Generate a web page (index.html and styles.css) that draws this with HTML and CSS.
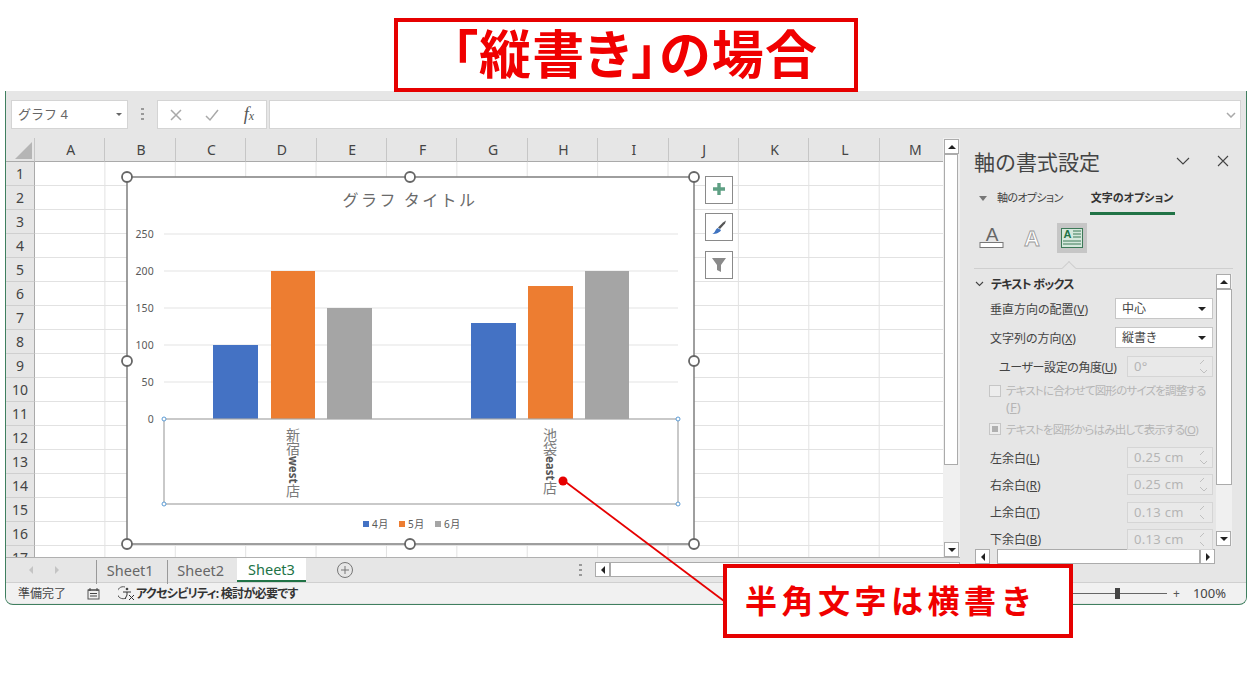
FILE: index.html
```html
<!DOCTYPE html>
<html lang="ja">
<head>
  <meta charset="UTF-8">
  <title>「縦書き」の場合</title>
  <link rel="stylesheet" href="styles.css">
</head>
<body>
  <div class="title-box">「縦書き」の場合</div>

  <div class="excel">
    <!-- 数式バー -->
    <div class="formula-bar">
      <div class="name-box">グラフ 4<span class="mini-arrow"></span></div>
      <div class="grip"></div>
      <div class="fx-buttons">
        <svg width="18" height="18" viewBox="0 0 18 18"><path class="stroke-light" d="M4 4l10 10M14 4L4 14"/></svg>
        <svg width="18" height="18" viewBox="0 0 18 18"><path class="stroke-light" d="M3 10l4 4 8-10"/></svg>
        <span class="fx">f<small>x</small></span>
      </div>
      <div class="formula-input"><svg width="10" height="6" viewBox="0 0 10 6"><path class="stroke-light" d="M1 1l4 4 4-4"/></svg></div>
    </div>

    <div class="middle">
      <div class="left-side">
        <div class="sheet-area">
          <div class="sheet">
            <div class="col-heads">
              <div class="corner"><span></span></div>
              <div class="col-head">A</div>
              <div class="col-head">B</div>
              <div class="col-head">C</div>
              <div class="col-head">D</div>
              <div class="col-head">E</div>
              <div class="col-head">F</div>
              <div class="col-head">G</div>
              <div class="col-head">H</div>
              <div class="col-head">I</div>
              <div class="col-head">J</div>
              <div class="col-head">K</div>
              <div class="col-head">L</div>
              <div class="col-head">M</div>
            </div>
            <div class="sheet-body">
              <div class="row-heads">
                <div class="row-head">1</div>
                <div class="row-head">2</div>
                <div class="row-head">3</div>
                <div class="row-head">4</div>
                <div class="row-head">5</div>
                <div class="row-head">6</div>
                <div class="row-head">7</div>
                <div class="row-head">8</div>
                <div class="row-head">9</div>
                <div class="row-head">10</div>
                <div class="row-head">11</div>
                <div class="row-head">12</div>
                <div class="row-head">13</div>
                <div class="row-head">14</div>
                <div class="row-head">15</div>
                <div class="row-head">16</div>
                <div class="row-head">17</div>
              </div>
              <div class="cells"></div>
            </div>

            <!-- グラフ（座標はページ座標のまま） -->
            <svg class="chart" width="630" height="390" viewBox="115 165 630 390">
              <rect x="127" y="177" width="567" height="367" fill="#fff" stroke="#7f7f7f" stroke-width="1.5"/>
              <text class="chart-title" x="410" y="206" text-anchor="middle">グラフ タイトル</text>

              <path class="gridline" d="M164 234H678M164 271H678M164 308H678M164 345H678M164 382H678"/>
              <text class="tick" x="154" y="238" text-anchor="end">250</text>
              <text class="tick" x="154" y="275" text-anchor="end">200</text>
              <text class="tick" x="154" y="312" text-anchor="end">150</text>
              <text class="tick" x="154" y="349" text-anchor="end">100</text>
              <text class="tick" x="154" y="386" text-anchor="end">50</text>
              <text class="tick" x="154" y="423" text-anchor="end">0</text>

              <rect x="213" y="345" width="45" height="74" fill="#4472c4"/>
              <rect x="271" y="271" width="44" height="148" fill="#ed7d31"/>
              <rect x="327" y="308" width="45" height="111" fill="#a5a5a5"/>
              <rect x="471" y="323" width="45" height="96" fill="#4472c4"/>
              <rect x="528" y="286" width="45" height="133" fill="#ed7d31"/>
              <rect x="585" y="271" width="44" height="148" fill="#a5a5a5"/>

              <rect x="164" y="419" width="514" height="85" fill="none" stroke="#a6a6a6" stroke-width="1.2"/>
              <circle class="small-handle" cx="164" cy="419" r="2"/>
              <circle class="small-handle" cx="678" cy="419" r="2"/>
              <circle class="small-handle" cx="164" cy="504" r="2"/>
              <circle class="small-handle" cx="678" cy="504" r="2"/>

              <text class="axis-label" x="293" y="428">新宿<tspan class="latin">west</tspan>店</text>
              <text class="axis-label" x="550" y="428">池袋<tspan class="latin">east</tspan>店</text>

              <rect x="363" y="521" width="6" height="6" fill="#4472c4"/>
              <text class="legend" x="372" y="528">4月</text>
              <rect x="399" y="521" width="6" height="6" fill="#ed7d31"/>
              <text class="legend" x="408" y="528">5月</text>
              <rect x="435" y="521" width="6" height="6" fill="#a5a5a5"/>
              <text class="legend" x="444" y="528">6月</text>

              <circle class="handle" cx="127" cy="177" r="5"/>
              <circle class="handle" cx="410" cy="177" r="5"/>
              <circle class="handle" cx="694" cy="177" r="5"/>
              <circle class="handle" cx="127" cy="361" r="5"/>
              <circle class="handle" cx="694" cy="361" r="5"/>
              <circle class="handle" cx="127" cy="544" r="5"/>
              <circle class="handle" cx="410" cy="544" r="5"/>
              <circle class="handle" cx="694" cy="544" r="5"/>

              <rect class="chart-btn" x="705.500" y="176.500" width="27" height="27"/>
              <path d="M719 183v12M713 189h12" stroke="#5fa084" stroke-width="3.400" fill="none"/>
              <rect class="chart-btn" x="705.500" y="213.500" width="27" height="27"/>
              <path d="M726 220.500l-1 3-5 5.500-2-1.500 5-5z" fill="#555"/>
              <path d="M712 234c3-.5 3-4.500 5.500-6l3.500 2c-1 2.500-4.500 4-9 4z" fill="#3f73c0"/>
              <rect class="chart-btn" x="705.500" y="251.500" width="27" height="27"/>
              <path d="M712 258h14l-5 7v7l-4-2v-5z" fill="#8a8a8a"/>
            </svg>
          </div>

          <div class="v-scroll">
            <div class="sb-btn"><span class="tri-up"></span></div>
            <div class="sb-thumb sheet-thumb"></div>
            <div class="sb-space"></div>
            <div class="sb-btn"><span class="tri-down"></span></div>
          </div>
        </div>

        <div class="tab-bar">
          <div class="tab-arrows"><span class="arrow-l"></span><span class="arrow-r"></span></div>
          <div class="tab">Sheet1</div>
          <div class="tab">Sheet2</div>
          <div class="tab active">Sheet3</div>
          <div class="add-sheet">
            <svg width="18" height="18" viewBox="0 0 18 18"><circle cx="9" cy="9" r="7.500" fill="none" stroke="#777"/><path d="M9 5v8M5 9h8" stroke="#777" fill="none"/></svg>
          </div>
          <div class="grip tab-grip"></div>
          <div class="h-scroll">
            <div class="sb-btn"><span class="tri-left"></span></div>
            <div class="sb-thumb"></div>
          </div>
        </div>
      </div>

      <!-- 書式設定パネル -->
      <div class="panel">
        <div class="panel-head">
          <h1>軸の書式設定</h1>
          <svg class="panel-chevron" width="14" height="8" viewBox="0 0 14 8"><path class="stroke-dark" d="M1 1l6 6 6-6"/></svg>
          <svg class="panel-close" width="12" height="12" viewBox="0 0 12 12"><path class="stroke-dark" d="M1 1l10 10M11 1L1 11"/></svg>
        </div>
        <div class="panel-tabs">
          <span class="tab-caret"></span>
          <span class="ptab">軸のオプション</span>
          <span class="ptab active">文字のオプション</span>
        </div>
        <div class="panel-icons">
          <svg class="icon-fill" width="26" height="26" viewBox="0 0 26 26">
            <text class="icon-a" x="13" y="16" text-anchor="middle">A</text>
            <rect x="1" y="17.500" width="23" height="5" fill="#fff" stroke="#777"/>
          </svg>
          <svg class="icon-outline" width="20" height="26" viewBox="0 0 20 26">
            <text class="icon-a-line" x="10" y="21" text-anchor="middle">A</text>
          </svg>
          <div class="icon-selected">
            <svg width="22" height="20" viewBox="0 0 22 20">
              <rect x="0.500" y="0.500" width="21" height="19" fill="#d5e8dc" stroke="#3d7a58"/>
              <text class="icon-a-small" x="6.500" y="10" text-anchor="middle">A</text>
              <path d="M12 3h8M12 6h8M12 9h8M2 13h18M2 16h18" stroke="#3d7a58" fill="none"/>
            </svg>
          </div>
        </div>
        <div class="panel-rule"><span></span></div>

        <div class="panel-body">
          <div class="section">
            <div class="section-head">
              <svg width="9" height="6" viewBox="0 0 9 6"><path class="stroke-dark" d="M1 1l3.500 3.500L8 1"/></svg>
              <span>テキスト ボックス</span>
            </div>
            <div class="field">
              <label>垂直方向の配置(<u>V</u>)</label>
              <div class="select">中心<span class="tri-down"></span></div>
            </div>
            <div class="field">
              <label>文字列の方向(<u>X</u>)</label>
              <div class="select">縦書き<span class="tri-down"></span></div>
            </div>
            <div class="field">
              <label class="indent">ユーザー設定の角度(<u>U</u>)</label>
              <div class="spin">0°<span class="spin-arrows"></span></div>
            </div>
            <div class="check two-lines">
              <span class="box"></span>
              <span>テキストに合わせて図形のサイズを調整する<br><span class="wide">(<u>F</u>)</span></span>
            </div>
            <div class="check">
              <span class="box on"></span>
              <span>テキストを図形からはみ出して表示する(<u>O</u>)</span>
            </div>
            <div class="field tight">
              <label>左余白(<u>L</u>)</label>
              <div class="spin">0.25 cm<span class="spin-arrows"></span></div>
            </div>
            <div class="field tight">
              <label>右余白(<u>R</u>)</label>
              <div class="spin">0.25 cm<span class="spin-arrows"></span></div>
            </div>
            <div class="field tight">
              <label>上余白(<u>T</u>)</label>
              <div class="spin">0.13 cm<span class="spin-arrows"></span></div>
            </div>
            <div class="field tight">
              <label>下余白(<u>B</u>)</label>
              <div class="spin">0.13 cm<span class="spin-arrows"></span></div>
            </div>
          </div>
          <div class="v-scroll inner">
            <div class="sb-btn"><span class="tri-up"></span></div>
            <div class="sb-thumb inner-thumb"></div>
            <div class="sb-space"></div>
            <div class="sb-btn"><span class="tri-down"></span></div>
          </div>
        </div>
        <div class="panel-hscroll">
          <div class="sb-btn"><span class="tri-left"></span></div>
          <div class="sb-thumb"></div>
          <div class="sb-btn"><span class="tri-right"></span></div>
        </div>
      </div>
    </div>

    <!-- ステータスバー -->
    <div class="status-bar">
      <span class="ready">準備完了</span>
      <svg class="macro-icon" width="13" height="13" viewBox="0 0 13 13">
        <rect x="1" y="3" width="11" height="9" fill="#eee" stroke="#555"/>
        <path d="M1 3h11M3 1v3M10 1v3M3 6.500h7M3 9h7" stroke="#444" fill="none"/>
      </svg>
      <svg class="access-icon" width="17" height="16" viewBox="0 0 17 16">
        <path d="M7 2a6 6 0 1 0 1 11" stroke="#555" fill="none"/>
        <circle cx="9" cy="4" r="1.300" fill="#444"/>
        <path d="M5 7h8M9 7v3M9 10l-2 4M11 10l5 5M16 10l-5 5" stroke="#333" fill="none"/>
      </svg>
      <span class="access-text">アクセシビリティ: 検討が必要です</span>
      <div class="zoom-area">
        <div class="zoom-slider"><span></span></div>
        <span class="zoom-plus">+</span>
        <span class="zoom-pct">100%</span>
      </div>
    </div>
  </div>

  <svg class="pointer" width="1258" height="686" viewBox="0 0 1258 686">
    <path d="M563 480L724 601" stroke="#e60000" stroke-width="1.800" fill="none"/>
    <circle cx="563" cy="481" r="4.500" fill="#e60000"/>
  </svg>
  <div class="callout">半角文字は横書き</div>
</body>
</html>
```

FILE: styles.css
```css
* { box-sizing: border-box; }
html, body { margin: 0; padding: 0; }
body {
  position: relative;
  width: 1258px;
  height: 686px;
  overflow: hidden;
  background: #fff;
  font-family: "Noto Sans", "Noto Sans CJK JP", sans-serif;
  color: #444;
}
svg { display: block; }
.stroke-light { stroke: #a9a9a9; stroke-width: 1.500; fill: none; }
.stroke-dark { stroke: #444; stroke-width: 1.100; fill: none; }

.title-box {
  position: relative;
  z-index: 2;
  width: 464px;
  height: 74px;
  margin: 18px 0 0 394px;
  padding-left: 18px;
  border: 4px solid #e60000;
  background: #fff;
  color: #f00000;
  font: 700 52px/60px "Noto Sans CJK JP", sans-serif;
  font-feature-settings: "palt";
  letter-spacing: 1.300px;
  text-align: center;
}
.callout {
  position: absolute;
  left: 723px;
  top: 564px;
  width: 350px;
  height: 74px;
  padding-left: 18px;
  border: 4px solid #e60000;
  background: #fff;
  color: #f00000;
  font: 700 32px/62px "Noto Sans CJK JP", sans-serif;
  letter-spacing: 4.500px;
}
.pointer { position: absolute; left: 0; top: 0; }

/* Excel window */
.excel {
  width: 1242px;
  height: 514px;
  margin: -1px 0 0 5px;
  border: 1px solid #3f7f5f;
  border-top: 0;
  border-radius: 0 0 8px 8px;
  background: #e6e6e6;
  overflow: hidden;
}
.formula-bar {
  display: flex;
  align-items: flex-start;
  height: 47px;
  padding: 9px 5px 0 5px;
}
.name-box {
  position: relative;
  width: 117px;
  height: 29px;
  padding-left: 6px;
  border: 1px solid #d4d4d4;
  background: #fff;
  color: #666;
  font-size: 13px;
  line-height: 27px;
}
.mini-arrow {
  position: absolute;
  right: 5px;
  top: 12px;
  border: 3px solid transparent;
  border-top: 3px solid #666;
}
.grip {
  width: 3px;
  height: 13px;
  margin: 8px 13px 0 13px;
  background: repeating-linear-gradient(#999 0 2px, transparent 2px 5px);
}
.fx-buttons {
  display: flex;
  align-items: center;
  justify-content: space-between;
  width: 110px;
  height: 29px;
  padding: 0 12px 0 9px;
  border: 1px solid #d4d4d4;
  background: #fff;
}
.fx-buttons svg:nth-child(2) { margin-left: -4px; }
.fx {
  color: #555;
  font: italic 18px "Liberation Serif", serif;
}
.fx small { font-size: 12px; }
.formula-input {
  display: flex;
  flex: 1;
  align-items: center;
  justify-content: flex-end;
  height: 29px;
  margin-left: 2px;
  padding-right: 4px;
  border: 1px solid #d4d4d4;
  background: #fff;
}

.middle { display: flex; height: 444px; }
.left-side { width: 954px; }
.sheet-area { display: flex; height: 419px; }

.sheet { position: relative; width: 937px; overflow: hidden; }
.col-heads { display: flex; height: 24px; }
.corner {
  position: relative;
  width: 29px;
  flex-shrink: 0;
  border-right: 1px solid #c6c6c6;
  border-bottom: 1px solid #aaa;
}
.corner span {
  position: absolute;
  right: 2px;
  bottom: 2px;
  border-left: 17px solid transparent;
  border-bottom: 17px solid #b5b5b5;
}
.col-head {
  width: 70.400px;
  flex-shrink: 0;
  padding-left: 2px;
  border-right: 1px solid #c6c6c6;
  border-bottom: 1px solid #aaa;
  font-size: 14px;
  line-height: 23px;
  text-align: center;
}
.sheet-body { display: flex; height: 395px; }
.row-heads { width: 29px; flex-shrink: 0; }
.row-head {
  height: 24px;
  padding-top: 1px;
  border-right: 1px solid #aaa;
  border-bottom: 1px solid #cfcfcf;
  font-size: 14px;
  line-height: 22px;
  text-align: center;
}
.cells {
  flex: 1;
  background-color: #fff;
  background-image:
    linear-gradient(#e2e2e2 1px, transparent 1px),
    linear-gradient(90deg, #e2e2e2 1px, transparent 1px);
  background-size: 70.400px 24px;
  background-position: -1px -1px;
}
.chart { position: absolute; left: 109px; top: 27px; }
.chart-title { font-size: 16px; letter-spacing: 2.400px; fill: #6a6a6a; font-family: "Noto Sans CJK JP", sans-serif; }
.gridline { stroke: #e3e3e3; fill: none; }
.tick { font-size: 10.500px; fill: #595959; letter-spacing: 0.200px; }
.axis-label {
  writing-mode: vertical-rl;
  font-size: 14px;
  fill: #7a7a7a;
  font-family: "Noto Sans CJK JP", sans-serif;
}
.axis-label .latin { font-size: 11.500px; font-weight: 700; font-family: "Noto Sans", sans-serif; fill: #555; }
.legend { font-size: 10px; fill: #595959; letter-spacing: 0.500px; }
.handle { fill: #fff; stroke: #666; stroke-width: 1.800; }
.small-handle { fill: #fff; stroke: #5b9bd5; }
.chart-btn { fill: #fff; stroke: #8a8a8a; }

/* scrollbars */
.v-scroll {
  display: flex;
  flex-direction: column;
  width: 17px;
  padding: 1px 2px 0 1px;
  background: #f0f0f0;
}
.sb-btn {
  display: flex;
  flex-shrink: 0;
  align-items: center;
  justify-content: center;
  width: 15px;
  height: 15px;
  border: 1px solid #ababab;
  background: #fff;
}
.sb-thumb { background: #fff; border: 1px solid #ababab; }
.sb-space { flex: 1; }
.sheet-thumb { height: 311px; }
.inner-thumb { height: 196px; }
.tri-up, .tri-down, .tri-left, .tri-right { display: block; width: 0; height: 0; border: 4px solid transparent; }
.tri-up { border-bottom: 4px solid #222; border-top-width: 0; }
.tri-down { border-top: 4px solid #222; border-bottom-width: 0; }
.tri-left { border-right: 4px solid #222; border-left-width: 0; }
.tri-right { border-left: 4px solid #222; border-right-width: 0; }

/* sheet tabs */
.tab-bar {
  display: flex;
  align-items: flex-start;
  height: 25px;
  border-top: 1px solid #b0b0b0;
  color: #666;
  font-size: 14.500px;
}
.tab-arrows {
  display: flex;
  gap: 22px;
  width: 90px;
  height: 23px;
  padding: 8px 0 0 23px;
}
.arrow-l { border: 4px solid transparent; border-right: 4px solid #c4c4c4; border-left-width: 0; height: 0; }
.arrow-r { border: 4px solid transparent; border-left: 4px solid #c4c4c4; border-right-width: 0; height: 0; }
.tab {
  width: 70.500px;
  height: 24px;
  margin-top: 2px;
  padding-right: 3px;
  border-left: 1px solid #999;
  line-height: 20px;
  text-align: center;
}
.tab.active {
  width: 69px;
  margin-top: 0;
  padding-right: 0;
  border-left: 0;
  border-bottom: 2px solid #217346;
  background: #fff;
  color: #217346;
  line-height: 22px;
}
.add-sheet { margin: 3px 0 0 30px; }
.tab-grip { margin: 6px 0 0 225px; }
.h-scroll { display: flex; flex: 1; height: 15px; margin: 4px 0 0 13px; }
.h-scroll .sb-thumb { flex: 1; }

/* format panel */
.panel {
  width: 286px;
  padding-left: 14px;
  background: #e6e6e6;
  font-size: 12px;
  font-feature-settings: "palt";
}
.panel-head { display: flex; align-items: center; height: 45px; margin-bottom: 1px; }
.panel-head h1 {
  width: 202px;
  margin: 0;
  color: #444;
  font: 400 21px "Noto Sans CJK JP", sans-serif;
  font-feature-settings: normal;
}
.panel-close { margin-left: 27px; }
.panel-tabs { display: flex; align-items: flex-start; height: 31px; font-size: 11px; }
.tab-caret {
  width: 0;
  height: 0;
  margin: 12px 10px 0 5px;
  border: 4.500px solid transparent;
  border-top: 5px solid #777;
  border-bottom-width: 0;
}
.ptab { padding: 5px 0 0 0; letter-spacing: -0.600px; line-height: 18px; }
.ptab.active {
  width: 85px;
  height: 31px;
  margin-left: 27px;
  padding-left: 1px;
  border-bottom: 3px solid #217346;
  color: #333;
  font-weight: 700;
  letter-spacing: 0;
}
.panel-icons { display: flex; align-items: center; height: 30px; margin: 8px 0 0 5px; }
.icon-a { font: 400 19px "Liberation Sans", sans-serif; fill: #666; }
.icon-outline { margin-left: 17px; }
.icon-a-line { font: 700 22px "Liberation Sans", sans-serif; fill: #fff; stroke: #999; stroke-width: 0.800; }
.icon-selected {
  display: flex;
  align-items: center;
  justify-content: center;
  width: 30px;
  height: 30px;
  margin-left: 15px;
  background: #c6c6c6;
}
.icon-a-small { font: 700 11px "Liberation Sans", sans-serif; fill: #217346; }
.panel-rule {
  position: relative;
  width: 259px;
  height: 1px;
  margin-top: 15px;
  background: #cfcfcf;
}
.panel-rule span {
  position: absolute;
  left: 90px;
  top: -5px;
  width: 10px;
  height: 10px;
  border-left: 1px solid #cfcfcf;
  border-top: 1px solid #cfcfcf;
  background: #e6e6e6;
  transform: rotate(45deg);
}
.panel-body { display: flex; height: 272px; margin-top: 5px; }
.section { width: 243px; }
.section-head {
  display: flex;
  align-items: center;
  gap: 7px;
  height: 20px;
  margin-bottom: 4px;
  padding-left: 1px;
  color: #333;
  font-weight: 700;
  letter-spacing: -0.800px;
}
.field {
  display: flex;
  align-items: center;
  height: 21px;
  margin-bottom: 8px;
  padding-left: 16px;
}
.field.tight { margin-bottom: 6.300px; }
.field label { flex: 1; white-space: nowrap; }
.field label.indent { padding-left: 9px; letter-spacing: -0.400px; }
.select, .spin {
  position: relative;
  height: 21px;
  line-height: 19px;
  border: 1px solid #c6c6c6;
  margin-right: 4px;
}
.select {
  display: flex;
  align-items: center;
  justify-content: space-between;
  width: 98px;
  padding: 0 6px;
  background: #fff;
}
.spin {
  width: 86px;
  padding-left: 6px;
  border-color: #d5d5d5;
  background: #e9e9e9;
  color: #b5b5b5;
  font-size: 13px;
  letter-spacing: 0.300px;
}
.spin-arrows {
  position: absolute;
  right: 5px;
  top: 3px;
  width: 7px;
  height: 13px;
  background:
    linear-gradient(135deg, transparent 50%, #c0c0c0 50%, #c0c0c0 62%, transparent 62%) 0 0 / 4px 4px no-repeat,
    linear-gradient(225deg, transparent 50%, #c0c0c0 50%, #c0c0c0 62%, transparent 62%) 4px 0 / 4px 4px no-repeat,
    linear-gradient(45deg, transparent 50%, #c0c0c0 50%, #c0c0c0 62%, transparent 62%) 0 9px / 4px 4px no-repeat,
    linear-gradient(315deg, transparent 50%, #c0c0c0 50%, #c0c0c0 62%, transparent 62%) 4px 9px / 4px 4px no-repeat;
}
.check {
  display: flex;
  gap: 5px;
  height: 20px;
  margin: 0 0 6px 15px;
  color: #b5b5b5;
  font-size: 11.500px;
  letter-spacing: -0.800px;
  line-height: 18px;
  white-space: nowrap;
}
.check.two-lines { height: 32px; margin: -2px 0 6px 15px; line-height: 16px; }
.check .wide { font-size: 13px; letter-spacing: 0; }
.box {
  position: relative;
  flex-shrink: 0;
  width: 12px;
  height: 12px;
  margin-top: 2px;
  border: 1px solid #c6c6c6;
  background: #ededed;
}
.box.on::after {
  content: "";
  position: absolute;
  left: 2px;
  top: 2px;
  width: 6px;
  height: 6px;
  background: #b0b0b0;
}
.v-scroll.inner { width: 16px; margin-left: -1px; padding: 0; }
.panel-hscroll { display: flex; width: 240px; height: 15px; margin: 3px 0 0 1px; }
.panel-hscroll .sb-btn:first-child { margin-right: 7px; }
.panel-hscroll .sb-thumb { flex: 1; }

/* status bar */
.status-bar {
  display: flex;
  align-items: center;
  height: 21px;
  padding-left: 12px;
  border-top: 1px solid #d0d0d0;
  background: #f1f1f1;
  color: #444;
  font-size: 12px;
  font-feature-settings: "palt";
}
.ready { width: 69px; }
.access-icon { margin-left: 18px; }
.access-text { margin-left: 1px; color: #333; font-weight: 700; letter-spacing: -0.700px; }
.zoom-area { display: flex; align-items: center; margin-left: auto; padding-right: 20px; }
.zoom-slider { position: relative; width: 94px; height: 1px; background: #666; }
.zoom-slider span {
  position: absolute;
  left: 42px;
  top: -5px;
  width: 5px;
  height: 11px;
  background: #444;
}
.zoom-plus { margin-left: 6px; color: #555; }
.zoom-pct { margin-left: 13px; font-size: 13px; }
```
